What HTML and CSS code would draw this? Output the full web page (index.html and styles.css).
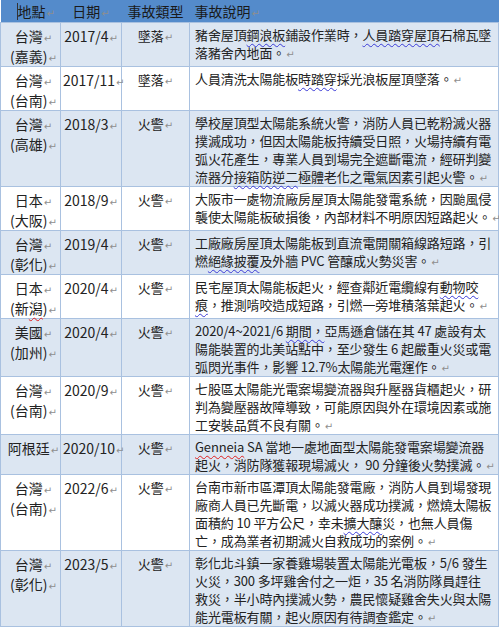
FILE: index.html
```html
<!DOCTYPE html>
<html lang="zh-Hant">
<head>
<meta charset="utf-8">
<title>太陽能事故</title>
<link rel="stylesheet" href="styles.css">
</head>
<body>
<table class="incidents">
  <colgroup>
    <col class="w-loc"><col class="w-date"><col class="w-type"><col class="w-desc">
  </colgroup>
  <thead>
    <tr>
      <th class="loc"><span class="caret"></span>地點<span class="pm">↵</span></th>
      <th class="date">日期<span class="pm">↵</span></th>
      <th class="type">事故類型</th>
      <th class="desc">事故說明<span class="pm">↵</span></th>
    </tr>
  </thead>
  <tbody>
    <tr class="band">
      <td class="loc">台灣<span class="pm">↵</span><br>(嘉義)<span class="pm">↵</span></td>
      <td class="date">2017/4<span class="pm">↵</span></td>
      <td class="type">墜落<span class="pm">↵</span></td>
      <td class="desc">豬舍屋頂<span class="sq">鋼浪板</span>鋪設作業時，<span class="sq">人員踏穿屋頂</span>石棉瓦墜<br>落豬舍內地面。<span class="pm">↵</span></td>
    </tr>
    <tr>
      <td class="loc">台灣<span class="pm">↵</span><br>(台南)<span class="pm">↵</span></td>
      <td class="date">2017/11<span class="pm">↵</span></td>
      <td class="type">墜落<span class="pm">↵</span></td>
      <td class="desc">人員清洗太陽能板<span class="sq">時踏穿</span>採光浪板屋頂墜落。<span class="pm">↵</span></td>
    </tr>
    <tr class="band">
      <td class="loc">台灣<span class="pm">↵</span><br>(高雄)<span class="pm">↵</span></td>
      <td class="date">2018/3<span class="pm">↵</span></td>
      <td class="type">火警<span class="pm">↵</span></td>
      <td class="desc">學校屋頂型太陽能系統火警，消防人員已乾粉滅火器<br>撲滅成功，但因太陽能板持續受日照，火場持續有電<br>弧火花產生，專業人員到場完全遮斷電流，經研判變<br>流器分<span class="sq">接箱防逆二</span>極體老化之電氣因素引起火警。<span class="pm">↵</span></td>
    </tr>
    <tr>
      <td class="loc">日本<span class="pm">↵</span><br>(大阪)<span class="pm">↵</span></td>
      <td class="date">2018/9<span class="pm">↵</span></td>
      <td class="type">火警<span class="pm">↵</span></td>
      <td class="desc">大阪市一處物流廠房屋頂太陽能發電系統，因颱風侵<br>襲使太陽能板破損後，內部材料不明原因短路起火。<span class="pm">↵</span></td>
    </tr>
    <tr class="band">
      <td class="loc">台灣<span class="pm">↵</span><br>(彰化)<span class="pm">↵</span></td>
      <td class="date">2019/4<span class="pm">↵</span></td>
      <td class="type">火警<span class="pm">↵</span></td>
      <td class="desc">工廠廠房屋頂太陽能板到直流電開關箱線路短路，引<br>燃<span class="sq">絕緣披覆</span>及外牆 PVC 管釀成火勢災害。<span class="pm">↵</span></td>
    </tr>
    <tr>
      <td class="loc">日本<span class="pm">↵</span><br>(新<span class="sq red">潟</span>)<span class="pm">↵</span></td>
      <td class="date">2020/4<span class="pm">↵</span></td>
      <td class="type">火警<span class="pm">↵</span></td>
      <td class="desc">民宅屋頂太陽能板起火，經查鄰近電纜線有<span class="sq">動物咬</span><br><span class="sq">痕</span>，推測啃咬造成短路，引燃一旁堆積落葉起火。<span class="pm">↵</span></td>
    </tr>
    <tr class="band">
      <td class="loc">美國<span class="pm">↵</span><br>(加州)<span class="pm">↵</span></td>
      <td class="date">2020/4<span class="pm">↵</span></td>
      <td class="type">火警<span class="pm">↵</span></td>
      <td class="desc">2020/4~2021/6 <span class="sq">期間，</span>亞馬遜倉儲在其 47 處設有太<br>陽能裝置的北美站點中，至少發生 6 起嚴重火災或電<br>弧閃光事件，影響 12.7%太陽能光電運作。<span class="pm">↵</span></td>
    </tr>
    <tr>
      <td class="loc">台灣<span class="pm">↵</span><br>(台南)<span class="pm">↵</span></td>
      <td class="date">2020/9<span class="pm">↵</span></td>
      <td class="type">火警<span class="pm">↵</span></td>
      <td class="desc">七股區太陽能光電案場變流器與升壓器貨櫃起火，研<br>判為變壓器故障導致，可能原因與外在環境因素或施<br>工安裝品質不良有關。<span class="pm">↵</span></td>
    </tr>
    <tr class="band">
      <td class="loc">阿根廷<span class="pm">↵</span></td>
      <td class="date">2020/10<span class="pm">↵</span></td>
      <td class="type">火警<span class="pm">↵</span></td>
      <td class="desc"><span class="sq red">Genneia</span> SA 當地一處地面型太陽能發電案場變流器<br>起火，消防隊獲報現場滅火， 90 分鐘後火勢撲滅。<span class="pm">↵</span></td>
    </tr>
    <tr>
      <td class="loc">台灣<span class="pm">↵</span><br>(台南)<span class="pm">↵</span></td>
      <td class="date">2022/6<span class="pm">↵</span></td>
      <td class="type">火警<span class="pm">↵</span></td>
      <td class="desc">台南市新市區潭頂太陽能發電廠，消防人員到場發現<br>廠商人員已先斷電，以滅火器成功撲滅，燃燒太陽板<br>面積約 10 平方公尺，幸未<span class="sq">擴大釀</span>災，也無人員傷<br>亡，成為業者初期滅火自救成功的案例。<span class="pm">↵</span></td>
    </tr>
    <tr class="band">
      <td class="loc">台灣<span class="pm">↵</span><br>(彰化)<span class="pm">↵</span></td>
      <td class="date">2023/5<span class="pm">↵</span></td>
      <td class="type">火警<span class="pm">↵</span></td>
      <td class="desc">彰化北斗鎮一家養雞場裝置太陽能光電板，5/6 發生<br>火災，300 多坪雞舍付之一炬，35 名消防隊員趕往<br>救災，半小時內撲滅火勢，農民懷疑雞舍失火與太陽<br>能光電板有關，起火原因有待調查鑑定。<span class="pm">↵</span></td>
    </tr>
  </tbody>
</table>
</body>
</html>
```

FILE: styles.css
```css
html, body {
  margin: 0;
  padding: 0;
  background: #ffffff;
}

body {
  font-family: "Noto Sans CJK TC", "Noto Sans", sans-serif;
  color: #222222;
}

.incidents {
  border-collapse: collapse;
  table-layout: fixed;
  width: 498px;
}

.w-loc { width: 60px; }
.w-date { width: 61px; }
.w-type { width: 68px; }
.w-desc { width: 309px; }

.incidents th {
  background: #548bcb;
  color: #1a1a1a;
  font-weight: normal;
  font-size: 14px;
  line-height: 20px;
  height: 22px;
  padding: 0 4px;
  box-sizing: border-box;
  text-align: center;
  white-space: nowrap;
  position: relative;
}

.incidents th.loc { text-align: left; padding-left: 17px; }
.incidents th.desc { text-align: left; padding-left: 5px; }

.caret {
  position: absolute;
  left: 16px;
  top: 3px;
  width: 1px;
  height: 17px;
  background: #333333;
}

.incidents td {
  vertical-align: top;
  border: 1px solid #a9c1e0;
  padding: 3px 2px 0;
  font-size: 14px;
  line-height: 20px;
  text-align: center;
}

.incidents td.loc {
  padding-left: 6px;
  padding-right: 0;
}

.incidents tr.band td { background: #dce6f2; }

.incidents td.type { font-size: 13px; }

.incidents td.desc {
  text-align: left;
  font-size: 13px;
  line-height: 18px;
  letter-spacing: -0.12px;
  padding: 3px 2px 0 5px;
  white-space: nowrap;
}

.pm {
  color: #8e8e8e;
  font-size: 10px;
  line-height: 1;
  font-family: "DejaVu Sans", sans-serif;
  margin-left: 1px;
}

.sq {
  text-decoration: underline wavy #3b3bd6;
  text-decoration-thickness: 1px;
  text-underline-offset: 3px;
}

.sq.red {
  text-decoration-color: #e02020;
}
```
